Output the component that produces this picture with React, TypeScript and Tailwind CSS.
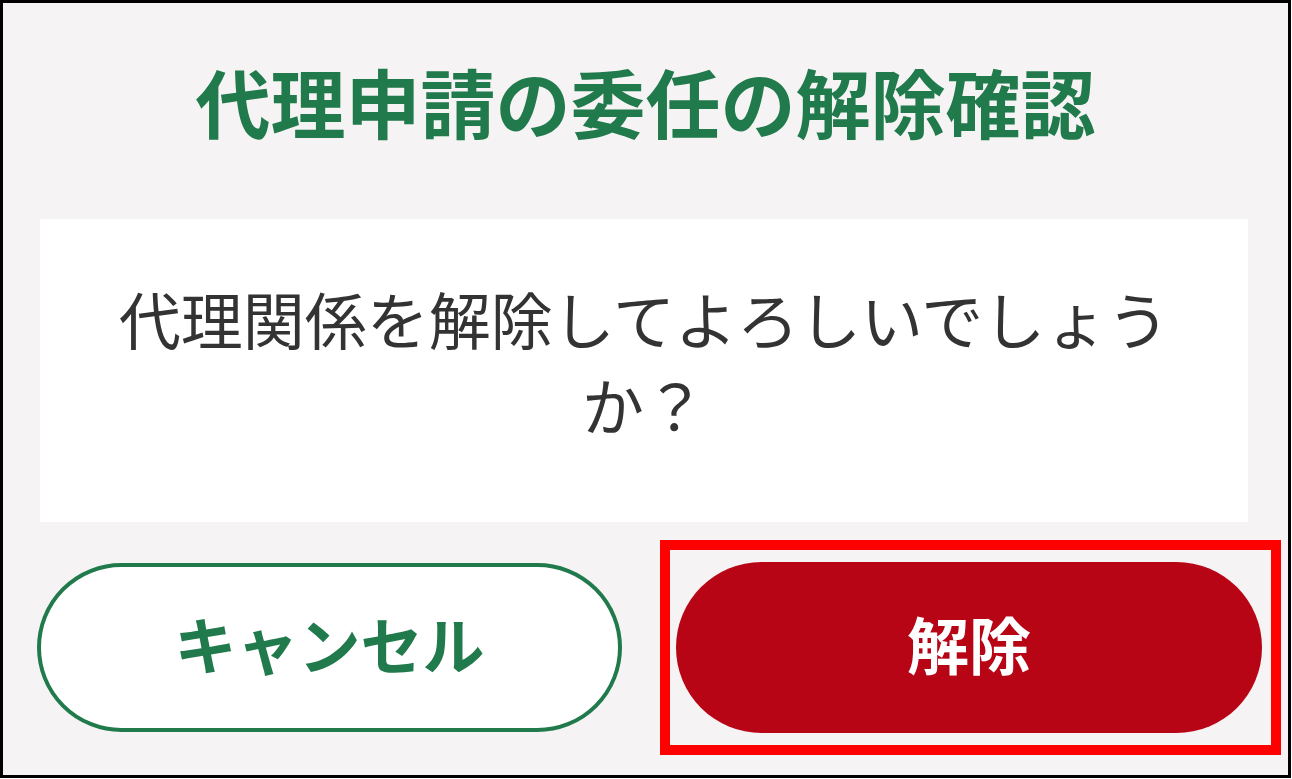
import React from "react";

const font = { fontFamily: '"Noto Sans CJK JP", "Noto Sans", sans-serif' };

const App: React.FC = () => {
  return (
    <div
      className="w-[1291px] h-[778px] border-[3px] border-black bg-[#f5f3f4] flex flex-col"
      style={font}
    >
      {/* Title */}
      <h1 className="mt-[60px] h-[75px] text-[75px] leading-none font-bold text-center text-[#217a4c]">
        代理申請の委任の解除確認
      </h1>

      {/* Message */}
      <div className="mt-[81px] ml-[37px] w-[1208px] h-[303px] bg-white px-[60px] pt-[56px]">
        <p className="text-[62px] leading-[86px] text-center text-[#333333]">
          代理関係を解除してよろしいでしょうか？
        </p>
      </div>

      {/* Buttons */}
      <div className="mt-[18px] ml-[34px] flex items-center gap-[38px]">
        <button className="w-[585px] h-[169px] pb-[10px] rounded-full border-[4px] border-[#217a4c] bg-white text-[62px] font-bold text-[#217a4c] leading-none">
          キャンセル
        </button>
        <div className="border-[10px] border-[#ff0000] pl-[6px] pr-[9px] py-[12px]">
          <button className="w-[586px] h-[171px] pb-[10px] rounded-full bg-[#b80516] text-[62px] font-bold text-white leading-none">
            解除
          </button>
        </div>
      </div>
    </div>
  );
};

export default App;
